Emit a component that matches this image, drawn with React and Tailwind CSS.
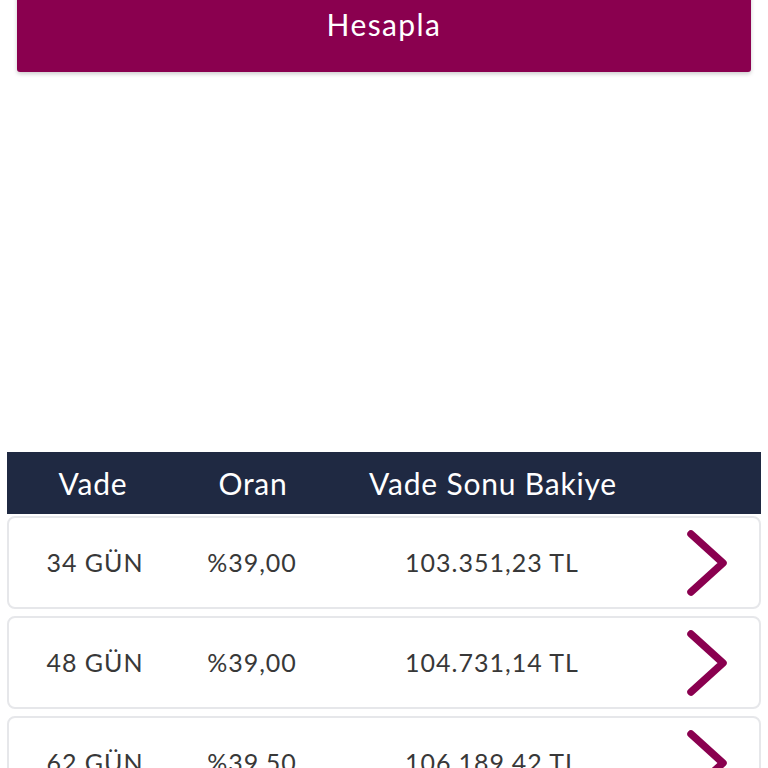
export default function App() {
  const rows = [
    { vade: '34 GÜN', oran: '%39,00', bakiye: '103.351,23 TL' },
    { vade: '48 GÜN', oran: '%39,00', bakiye: '104.731,14 TL' },
    { vade: '62 GÜN', oran: '%39,50', bakiye: '106.189,42 TL' },
  ];

  return (
    <div className="h-[768px] w-[768px] overflow-hidden bg-white" style={{ fontFamily: 'Lato, "Noto Sans", sans-serif' }}>
      <div className="px-[17px]">
        <button className="-mt-[24px] flex h-[96px] w-full items-center justify-center rounded-[3px] bg-[#8a004f] text-[30px] tracking-[1.4px] text-white shadow-[0_2px_4px_rgba(0,0,0,0.2)]">
          Hesapla
        </button>
      </div>

      <div className="mt-[380px] px-[7px]">
        <div className="grid h-[62px] grid-cols-[172px_148px_332px_1fr] items-center bg-[#1f2942] text-[30px] tracking-[0.8px] text-white">
          <div className="text-center">Vade</div>
          <div className="text-center">Oran</div>
          <div className="text-center">Vade Sonu Bakiye</div>
          <div />
        </div>

        <div className="mt-[2px] flex flex-col gap-[7px]">
          {rows.map((r) => (
            <div
              key={r.vade}
              className="grid h-[93px] grid-cols-[172px_142px_338px_1fr] items-center rounded-[8px] border-2 border-[#e6e7ea] text-[25px] tracking-[1px] text-[#383838]"
            >
              <div className="text-center">{r.vade}</div>
              <div className="text-center">{r.oran}</div>
              <div className="text-center">{r.bakiye}</div>
              <div className="flex justify-center pr-[6px]">
                <svg width="48" height="70" viewBox="0 0 48 70" fill="none">
                  <path d="M8 6 L40 35 L8 64" stroke="#8a004f" strokeWidth="7.5" strokeLinecap="round" strokeLinejoin="round" />
                </svg>
              </div>
            </div>
          ))}
        </div>
      </div>
    </div>
  );
}
